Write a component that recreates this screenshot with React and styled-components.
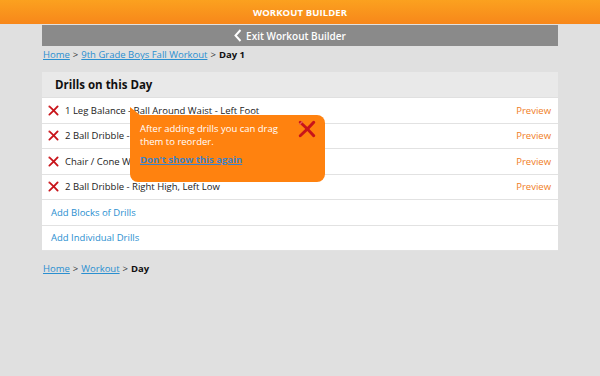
import styled, { createGlobalStyle } from "styled-components";

const GlobalStyle = createGlobalStyle`
  body {
    margin: 0;
    background: #e0e0e0;
    font-family: "Open Sans", "Liberation Sans", sans-serif;
  }
`;

const TopBar = styled.header`
  height: 24px;
  background: linear-gradient(#fba11f, #f7871a);
  color: #fff;
  font-weight: 700;
  font-size: 9.5px;
  display: flex;
  align-items: center;
  justify-content: center;
  letter-spacing: 0.1px;
`;

const Page = styled.main`
  width: 516px;
  margin: 0 auto;
`;

const ExitBar = styled.div`
  height: 21px;
  margin-top: 1px;
  background: #8a8a8a;
  color: #fff;
  font-size: 10px;
  font-weight: 600;
  display: flex;
  align-items: center;
  justify-content: center;
  gap: 4px;
  padding-right: 20px;
`;

const Crumbs = styled.nav`
  font-size: 9.5px;
  color: #333;
  padding: ${(p) => p.$pad};
  display: flex;
  gap: 3px;
  align-items: center;

  a {
    color: #2a8fd0;
    text-decoration: underline;
  }

  b {
    color: #111;
  }
`;

const Card = styled.section`
  margin-top: 11px;
  background: #fff;
`;

const CardHead = styled.h2`
  margin: 0;
  height: 25px;
  background: #e9e9e9;
  border-bottom: 1px solid #e0e0e0;
  font-size: 11.5px;
  font-weight: 700;
  color: #111;
  display: flex;
  align-items: center;
  padding-left: 13px;
`;

const Row = styled.div`
  height: 25.5px;
  box-sizing: border-box;
  border-bottom: 1px solid #e2e2e2;
  display: flex;
  align-items: center;
  padding: 0 7px 0 ${(p) => (p.$link ? "9px" : "6px")};
  font-size: 9.5px;
  color: #222;

  &:last-child {
    border-bottom: none;
  }
`;

const Name = styled.span`
  flex: 1;
  margin-left: 6px;
`;

const Preview = styled.a`
  color: #f07d1e;
  font-size: 9.5px;
`;

const AddLink = styled.a`
  color: #2a8fd0;
  font-size: 9.5px;
`;

const Body = styled.div`
  position: relative;
`;

const Tip = styled.div`
  position: absolute;
  left: 88px;
  top: 17px;
  width: 195px;
  height: 67px;
  box-sizing: border-box;
  background: #ff820f;
  border-radius: 0 8px 8px 8px;
  padding: 7px 10px;
  color: #fff;
  font-size: 9.5px;
  line-height: 13px;

  &::before {
    content: "";
    position: absolute;
    left: 0;
    top: -8px;
    border-left: 10px solid #ff820f;
    border-top: 8px solid transparent;
  }

  p {
    margin: 0 28px 0 0;
  }

  a {
    display: inline-block;
    margin-top: 5px;
    color: #3c82c8;
    font-weight: 700;
    text-decoration: underline;
  }
`;

const TipClose = styled.span`
  position: absolute;
  right: 9px;
  top: 5px;
`;

const Cross = ({ size = 11 }) => (
  <svg width={size} height={size} viewBox="0 0 12 12">
    <path d="M1.5 1.5 Q6 5.5 10.5 10.5" fill="none" stroke="#c8141a" strokeWidth="2" strokeLinecap="round" />
    <path d="M10.5 1.5 Q6 6.5 1.5 10.5" fill="none" stroke="#c8141a" strokeWidth="2" strokeLinecap="round" />
    <path d="M1 3 L3 1" stroke="#e85a5a" strokeWidth="0.8" />
  </svg>
);

const drills = [
  "1 Leg Balance - Ball Around Waist - Left Foot",
  "2 Ball Dribble - Left High, Right Low",
  "Chair / Cone Weave - Left Hand",
  "2 Ball Dribble - Right High, Left Low",
];

export default function App() {
  return (
    <>
      <GlobalStyle />
      <TopBar>WORKOUT BUILDER</TopBar>
      <Page>
        <ExitBar>
          <svg width="8" height="13" viewBox="0 0 8 13">
            <path d="M6.5 1 L1.5 6.5 L6.5 12" fill="none" stroke="#fff" strokeWidth="2" />
          </svg>
          Exit Workout Builder
        </ExitBar>
        <Crumbs $pad="2px 1px 0">
          <a href="#">Home</a>&gt;<a href="#">9th Grade Boys Fall Workout</a>&gt;<b>Day 1</b>
        </Crumbs>
        <Card>
          <CardHead>Drills on this Day</CardHead>
          <Body>
            {drills.map((d) => (
              <Row key={d}>
                <Cross />
                <Name>{d}</Name>
                <Preview>Preview</Preview>
              </Row>
            ))}
            <Row $link>
              <AddLink>Add Blocks of Drills</AddLink>
            </Row>
            <Row $link>
              <AddLink>Add Individual Drills</AddLink>
            </Row>
            <Tip>
              <p>After adding drills you can drag them to reorder.</p>
              <a href="#">Don't show this again</a>
              <TipClose>
                <Cross size={18} />
              </TipClose>
            </Tip>
          </Body>
        </Card>
        <Crumbs $pad="11px 1px 0">
          <a href="#">Home</a>&gt;<a href="#">Workout</a>&gt;<b>Day</b>
        </Crumbs>
      </Page>
    </>
  );
}
